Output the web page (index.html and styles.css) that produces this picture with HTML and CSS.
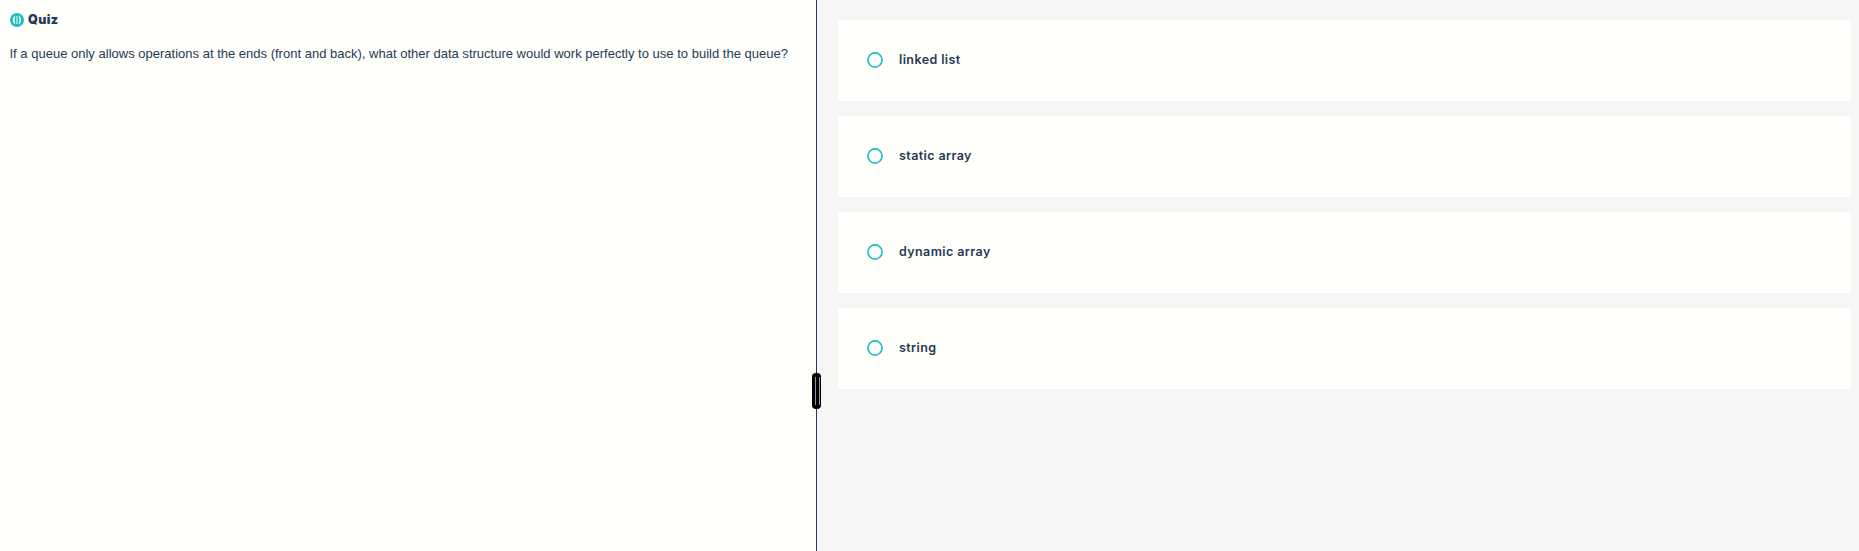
FILE: index.html
```html
<!DOCTYPE html>
<html lang="en">
<head>
<meta charset="utf-8">
<title>Quiz</title>
<link rel="stylesheet" href="styles.css">
</head>
<body>
<main class="layout">
  <section class="question">
    <header class="heading">
      <svg class="logo" viewBox="0 0 14 14"><circle cx="7" cy="7" r="7" fill="#18bfbf"/><path d="M5.4 2.5C2 4.3 2 9.7 5.4 11.5C4.5 9 4.5 5 5.4 2.5ZM8.6 2.5C12 4.3 12 9.7 8.6 11.5C9.5 9 9.5 5 8.6 2.5Z" fill="#fffffc"/><path d="M7 3V11" stroke="#fffffc" stroke-width="1"/></svg>
      <h1 class="title">Quiz</h1>
    </header>
    <p class="prompt">If a queue only allows operations at the ends (front and back), what other data structure would work perfectly to use to build the queue?</p>
  </section>
  <div class="divider"><span class="handle"></span></div>
  <section class="answers">
    <label class="option"><svg class="radio" viewBox="0 0 16 16"><circle cx="8" cy="8" r="7.1"/></svg><span class="label">linked list</span></label>
    <label class="option"><svg class="radio" viewBox="0 0 16 16"><circle cx="8" cy="8" r="7.1"/></svg><span class="label">static array</span></label>
    <label class="option"><svg class="radio" viewBox="0 0 16 16"><circle cx="8" cy="8" r="7.1"/></svg><span class="label">dynamic array</span></label>
    <label class="option"><svg class="radio" viewBox="0 0 16 16"><circle cx="8" cy="8" r="7.1"/></svg><span class="label">string</span></label>
  </section>
</main>
</body>
</html>
```
FILE: styles.css
```css
* { box-sizing: border-box; }
body { margin: 0; color: #243b53; background: #fffffc; }
.layout { display: flex; height: 551px; overflow: hidden; }
.question { width: 816px; padding: 10px; }
.heading { display: flex; align-items: center; height: 20px; gap: 4px; }
.logo { width: 14px; height: 14px; display: block; }
.title { margin: 0; font: 900 12.5px/20px Inter, sans-serif; letter-spacing: 0.35px; }
.prompt { margin: 15px 0 0 -0.5px; font: 13px/17px "Liberation Sans", Arial, sans-serif; white-space: nowrap; letter-spacing: 0.006px; }
.divider { position: relative; width: 1px; background: #1f3864; }
.handle { position: absolute; left: -4px; top: 373px; width: 9px; height: 36px; border-radius: 4px; background: #000; }
.handle::before { content: ""; position: absolute; left: 3px; top: 4px; width: 3px; height: 28px; border: solid #8795ad; border-width: 0 1px; }
.answers { flex: 1; display: flex; flex-direction: column; gap: 15px; padding: 20px 8px 0 21px; background: #f6f6f7; }
.option { display: flex; align-items: center; gap: 16px; height: 81px; padding: 0 0 1px 29px; border-radius: 2px; background: #fffffc; }
.radio { width: 16px; height: 16px; display: block; fill: none; stroke: #18bfbf; stroke-width: 1.6px; }
.label { font: 600 12.5px/18px Inter, sans-serif; letter-spacing: 0.4px; white-space: nowrap; }
```
